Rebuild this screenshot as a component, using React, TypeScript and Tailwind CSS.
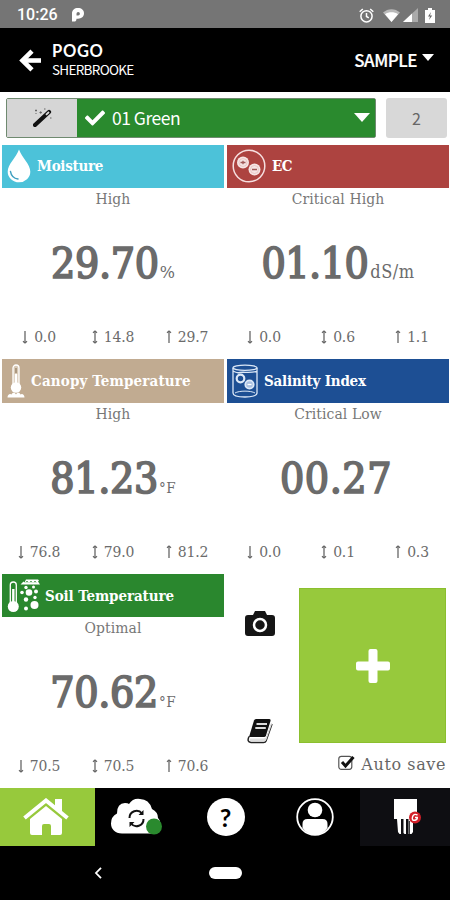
import React from "react";
import { FaCheck } from "react-icons/fa";

const slab = "font-['DejaVu_Serif_Condensed','DejaVu_Serif',serif] [font-stretch:90%]";
const sans = "font-['Noto_Sans_CJK_JP','Noto_Sans',sans-serif]";

const DropIcon = () => (
  <svg width="24" height="34" viewBox="0 0 24 34">
    <path d="M12 .5C9 9 .7 15 .7 22.800a11.300 10.500 0 0 0 22.600 0C23.300 15 15 9 12 .5Z" fill="#fff" />
    <path d="M3.500 22.500c.7 4.500 4 7 7.500 7.500" fill="none" stroke="#3f9fc0" strokeWidth="1.500" strokeLinecap="round" />
  </svg>
);

const IonIcon = () => (
  <svg width="34" height="34" viewBox="0 0 34 34">
    <circle cx="17" cy="17" r="15.800" fill="none" stroke="#f6dfdf" strokeWidth="1.500" />
    <circle cx="11" cy="13.500" r="6" fill="#f6e5e4" />
    <circle cx="22.500" cy="20.500" r="6" fill="#f6e5e4" />
    <path d="M8.500 13.500h5M11 11.800v3.400M20 20.500h5" stroke="#a05a58" strokeWidth="1.300" />
    <circle cx="11" cy="13.500" r="4" fill="none" stroke="#dcaaa8" strokeWidth=".5" />
    <circle cx="22.500" cy="20.500" r="4" fill="none" stroke="#dcaaa8" strokeWidth=".5" />
  </svg>
);

const CanopyIcon = () => (
  <svg width="18" height="34" viewBox="0 0 18 34">
    <rect x="6" y="1" width="6" height="24" rx="3" fill="#d8c9b6" stroke="#fff" strokeWidth="1.300" />
    <path d="M9 4v5" stroke="#a8937a" strokeWidth="1.800" />
    <path d="M9 10v14" stroke="#fff" strokeWidth="2.400" />
    <circle cx="9" cy="23.500" r="5.200" fill="#fff" />
    <path d="M.5 33.500c0-3 2.500-4.500 4-3 1-2.500 3.500-2 4.500 0 1-2 3.500-2.500 4.500 0 1.500-1.500 4 0 4 3Z" fill="#fff" />
  </svg>
);

const SalinityIcon = () => (
  <svg width="26" height="34" viewBox="0 0 26 34" fill="none" stroke="#dce8f7" strokeWidth="1.300">
    <ellipse cx="13" cy="3.800" rx="12" ry="2.600" />
    <path d="M1 4v25c0 2.500 5 4 12 4s12-1.500 12-4V4M1 7c3 1 3 2.500 7 1.500s8 1 17-1" />
    <circle cx="8.500" cy="14.500" r="3.800" strokeWidth="2.200" />
    <circle cx="17.500" cy="20.500" r="4.200" fill="#a9c0e1" strokeWidth="1.800" />
    <path d="M15.500 20.500h4" stroke="#fff" />
    <path d="M3 29c4-2.500 16-2.500 20 0" strokeWidth="1" />
  </svg>
);

const SoilIcon = () => (
  <svg width="33" height="34" viewBox="0 0 33 34">
    <rect x="3.300" y="3" width="6" height="24" rx="3" fill="none" stroke="#fff" strokeWidth="1.300" />
    <path d="M6.300 10v14" stroke="#fff" strokeWidth="2.400" />
    <circle cx="6.300" cy="27.500" r="5.500" fill="#fff" />
    <path d="M13.500 5.500l3-3 1 1 1.500-3h12l1 1-1 1 2 3Z" fill="#fff" />
    <path d="M19 3.500l1-1.500 1 1.500M23 3.500l1-1.500 1 1.500M27 3.500l1-1.500 1 1.500" fill="none" stroke="#2a872e" strokeWidth=".8" />
    <g fill="#fff">
      <circle cx="22" cy="13.500" r="3.300" /><circle cx="15" cy="13.500" r="1.800" /><circle cx="29" cy="12.500" r="2" />
      <circle cx="19" cy="8.500" r="1.700" /><circle cx="26.500" cy="8" r="1.500" /><circle cx="19" cy="20.500" r="2.200" />
      <circle cx="28" cy="18.500" r="1.700" /><circle cx="27.500" cy="26" r="4" /><circle cx="19" cy="29.500" r="2" />
    </g>
  </svg>
);

const StatArrow = ({ kind }: { kind: number }) => (
  <svg width="6" height="14" viewBox="0 0 6 14" fill="none" stroke="#666" strokeWidth="1.300">
    <path d="M3 1v12" />
    {kind !== 2 && <path d="M1 11.300L3 13l2-1.700" />}
    {kind !== 0 && <path d="M1 2.700L3 1l2 1.700" />}
  </svg>
);

type CardProps = {
  title: string; color: string; icon: React.ReactNode; gap: string;
  titleTrack: string; status: string; value: string; valueTrack: string; unit: string; unitClass: string; stats: string[];
};

const Card = ({ title, color, icon, gap, titleTrack, status, value, valueTrack, unit, unitClass, stats }: CardProps) => (
  <section className={`flex h-[214.700px] flex-col text-[#6b6b6b] ${slab}`}>
    <div className={`flex h-[43.500px] shrink-0 items-center pl-[5px] ${gap} ${color}`}>
      {icon}
      <h2 className={`whitespace-nowrap text-[15px] leading-5 font-bold text-white ${titleTrack}`}>{title}</h2>
    </div>
    <div className="h-[25px] text-center text-[15.500px] leading-[22px] tracking-[0.100px] text-[#777]">{status}</div>
    <div className="mt-[26px] flex h-[50px] items-baseline justify-center whitespace-nowrap">
      <span className={`text-[42.500px] leading-[50px] [-webkit-text-stroke:1.700px_#6b6b6b] ${valueTrack}`}>{value}</span>
      <span className={unitClass}>{unit}</span>
    </div>
    <div className="mt-[38px] grid grid-cols-3 text-[15.500px] leading-5 tracking-[-0.150px]">
      {stats.map((s, i) => (
        <div key={i} className="flex items-center justify-center gap-[6px]">
          <StatArrow kind={i} />
          <span>{s}</span>
        </div>
      ))}
    </div>
  </section>
);

export default function App() {
  return (
    <div className="flex h-[900px] w-[450px] flex-col overflow-hidden bg-white">
      <div className="flex h-[28px] items-center bg-[#757575] pt-[2px] pr-[15px] pl-[17px] text-white">
        <span className="w-[55px] font-[Roboto,sans-serif] text-[16px] leading-5 font-medium">10:26</span>
        <svg width="12" height="14" viewBox="0 0 12 14">
          <path fillRule="evenodd" d="M0 13.500V5.500C0 2 2.500 0 6 0s6 2 6 5.300-2.500 5.400-6 5.400H4.500c0 2-1 2.800-2.500 2.800ZM4.500 4.500v3h1.700a1.700 1.700 0 1 0-1.700-1.700Z" fill="#fff" />
        </svg>
        <div className="ml-auto flex items-center">
          <svg width="15" height="15" viewBox="0 0 15 15" fill="none" stroke="#fff" strokeWidth="1.500">
            <circle cx="7.500" cy="8.300" r="5.600" /><path d="M7.500 5v3.500l2.300 1.400M.7 3.800L3.800 1M14.300 3.800L11.200 1" />
          </svg>
          <svg className="ml-[9px]" width="17" height="13" viewBox="0 0 17 13">
            <path d="M0 3.500C5-1 12-1 17 3.500L8.500 13Z" fill="#b9b9b9" /><path d="M2 5.200c3.500-2.500 9.500-2.500 13 0L8.500 13Z" fill="#fff" />
          </svg>
          <svg className="ml-[3px]" width="15" height="14" viewBox="0 0 15 14">
            <path d="M15 0v14H0Z" fill="#aaa" /><path d="M9 5.600V14H0Z" fill="#fff" />
          </svg>
          <svg className="ml-[7px]" width="10" height="15" viewBox="0 0 10 15">
            <path d="M0 2h3V0h4v2h3v13H0Z" fill="#fff" /><path d="M6 4L3 8.500h2L4 12l3.200-4.500H5Z" fill="#666" />
          </svg>
        </div>
      </div>

      <header className={`flex h-[64px] shrink-0 items-center bg-black pr-[16px] pl-[19px] text-white ${sans}`}>
        <svg width="22" height="23" viewBox="0 0 22 23" fill="none" stroke="#fff" strokeWidth="4.600">
          <path d="M13 2.200L3.500 11.500 13 20.800" /><path d="M4 11.500h18" />
        </svg>
        <div className="ml-[11px] flex flex-col">
          <span className="font-[Lato,sans-serif] text-[16.500px] leading-[18px] font-bold tracking-[0.700px]">POGO</span>
          <span className="font-['Noto_Sans_CJK_JP','Noto_Sans',sans-serif] text-[13.500px] leading-[18px] tracking-[-0.700px]">SHERBROOKE</span>
        </div>
        <span className="ml-auto text-[17px] leading-5 font-medium tracking-[-0.500px] [-webkit-text-stroke:0.200px_white]">SAMPLE</span>
        <svg className="mb-[6px] ml-[5px]" width="12" height="7" viewBox="0 0 12 7"><path d="M0 0h12L6 7Z" fill="#fff" /></svg>
      </header>

      <div className={`flex h-[52.500px] shrink-0 items-start pt-[6px] pl-[6px] ${sans}`}>
        <div className="flex h-[39.500px] w-[370px] items-stretch rounded-[2px] border border-[#6f8a70]">
          <div className="flex w-[70px] items-center justify-center bg-[#d6d6d6]">
            <svg width="19" height="19" viewBox="0 0 19 19">
              <path d="M2 17L16 4" stroke="#111" strokeWidth="4.200" strokeLinecap="round" />
              <path d="M13 6.800l3-2.800" stroke="#ddd" strokeWidth="1.800" />
              <path d="M2 2.500h2M3 1.500v2M6.500 4.500h2.400M7.700 3.300v2.400M11 1h1.500M17 10h1.500M2.500 5.500h1" stroke="#666" />
            </svg>
          </div>
          <div className="flex flex-1 items-center bg-[#2a8a2e] pr-[5px] pl-[8px] text-white">
            <FaCheck className="h-[20px] w-[20px]" />
            <span className="ml-[7px] text-[17.500px] leading-6 tracking-[-0.500px]">01 Green</span>
            <svg className="ml-auto" width="16" height="9" viewBox="0 0 16 9"><path d="M0 0h16L8 9Z" fill="#fff" /></svg>
          </div>
        </div>
        <div className="ml-[10px] flex h-[39.500px] w-[61px] items-center justify-center rounded-[3px] bg-[#d8d8d8] text-[16px] text-[#666]">2</div>
      </div>

      <main className="grid h-[643.500px] shrink-0 grid-cols-[222px_222px] content-start gap-x-[3px] pl-[2px]">
        <Card title="Moisture" color="bg-[#4cc2d9]" icon={<DropIcon />} gap="gap-[6px]" titleTrack="tracking-[-0.300px]" status="High" value="29.70" valueTrack="tracking-[-0.300px]" unit="%" unitClass="ml-px text-[16px] [font-family:'DejaVu_Serif']" stats={["0.0", "14.8", "29.7"]} />
        <Card title="EC" color="bg-[#ad4340]" icon={<IonIcon />} gap="gap-[6px]" titleTrack="tracking-[-0.500px]" status="Critical High" value="01.10" valueTrack="tracking-[-0.500px]" unit="dS/m" unitClass="ml-[2px] text-[18px] tracking-[0.500px]" stats={["0.0", "0.6", "1.1"]} />
        <Card title="Canopy Temperature" color="bg-[#c1ab91]" icon={<CanopyIcon />} gap="gap-[6px]" titleTrack="tracking-[0.150px]" status="High" value="81.23" valueTrack="tracking-[-0.300px]" unit="°F" unitClass="ml-px text-[15px] tracking-[0.300px]" stats={["76.8", "79.0", "81.2"]} />
        <Card title="Salinity Index" color="bg-[#1d4f94]" icon={<SalinityIcon />} gap="gap-[6px]" titleTrack="tracking-[-0.200px]" status="Critical Low" value="00.27" valueTrack="tracking-[0.500px] mr-[4px]" unit="" unitClass="" stats={["0.0", "0.1", "0.3"]} />
        <Card title="Soil Temperature" color="bg-[#2a872e]" icon={<SoilIcon />} gap="gap-[5px]" titleTrack="tracking-[-0.100px]" status="Optimal" value="70.62" valueTrack="tracking-[-0.300px]" unit="°F" unitClass="ml-px text-[15px] tracking-[0.300px]" stats={["70.5", "70.5", "70.6"]} />
        <section className="flex h-[214px] pt-[14.500px] pl-[18px]">
          <div className="flex w-[54px] flex-col pt-[23px]">
            <svg width="30" height="26" viewBox="0 0 30 26">
              <path d="M3 4h5l2-4h10l2 4h5q3 0 3 3v15q0 3-3 3H3q-3 0-3-3V7q0-3 3-3Z" fill="#151515" />
              <circle cx="15" cy="14" r="6" fill="none" stroke="#fff" strokeWidth="2.500" />
            </svg>
            <svg className="mt-[82px] ml-[2px]" width="27" height="25" viewBox="0 0 27 25">
              <path d="M7 1.500Q7.500 0 9 0h13q2 0 1.500 2L19 16.500Q18.500 18 17 18H2Z" fill="#111" />
              <path d="M2 17.500q-2.500 5.500 2 6h12.500q2 0 2.500-1.500L25 5" fill="none" stroke="#222" strokeWidth="1.500" />
              <path d="M3 19.500h13.500q2.500 0 3-2L24 4l1 1-5.500 15.500q-.5 2-2.500 2H4q-2-1.500-1-3Z" fill="#ddd" />
              <path d="M9.500 5h10.500M8.300 9h10.500" stroke="#ddd" strokeWidth="1.800" />
            </svg>
          </div>
          <div className="flex w-[147px] flex-col">
            <div className="flex h-[155px] shrink-0 items-center justify-center border border-[#8bbf2e] bg-[#97c93c]">
              <svg width="34" height="34" viewBox="0 0 34 34"><path d="M14.500 0h5q2 0 2 2v10.500H32q2 0 2 2v5q0 2-2 2H21.500V32q0 2-2 2h-5q-2 0-2-2V21.500H2q-2 0-2-2v-5q0-2 2-2h10.500V2q0-2 2-2Z" fill="#fff" /></svg>
            </div>
            <div className="flex h-[44px] items-center justify-end gap-[6px]">
              <svg className="mb-[5px] shrink-0" width="17" height="15" viewBox="0 0 17 15" fill="none">
                <rect x=".8" y="1.300" width="13" height="13" rx="2.500" stroke="#555" strokeWidth="1.200" />
                <path d="M4 7l3.500 4L15.500 2" stroke="#111" strokeWidth="3" />
              </svg>
              <span className={`whitespace-nowrap text-[16px] tracking-[0.600px] text-[#666] font-['DejaVu_Serif',serif]`}>Auto save</span>
            </div>
          </div>
        </section>
      </main>

      <nav className="flex h-[58px] shrink-0 bg-black">
        <div className="flex w-[95px] items-center justify-center bg-[#97c93c]">
          <svg className="mr-[4px]" width="46" height="38" viewBox="0 0 46 38">
            <path d="M1.500 20L23 2.500 44.500 20" fill="none" stroke="#fff" strokeWidth="4" />
            <path d="M32 1h7v14l-7-6ZM7 21L23 8l16 13v14q0 2-2 2h-9v-9q0-2-2-2h-5q-2 0-2 2v9H9q-2 0-2-2Z" fill="#fff" />
          </svg>
        </div>
        <div className="flex w-[90px] items-center pl-[16px]">
          <svg width="52" height="38" viewBox="0 0 52 38">
            <path d="M11 35.500C4 35.500 0 31 0 25.500q0-7 6-10Q6 5 14 5q3 0 4 1Q22 0 29 1q9 0 12 10 6 3 6 9 3 3 2 8t-9 7.500Z" fill="#fff" />
            <path d="M18.500 20a7 7 0 0 1 12.500-4.500M32.500 21a7 7 0 0 1-12.500 4.500" fill="none" stroke="#111" strokeWidth="2" />
            <path d="M32.500 12v5h-5ZM18.500 29v-5h5Z" fill="#111" /><circle cx="43" cy="28.500" r="8" fill="#2a8a2e" />
          </svg>
        </div>
        <div className="flex w-[81px] items-center justify-center">
          <div className="flex h-[38px] w-[38px] items-center justify-center rounded-full bg-white font-[Lato,sans-serif] text-[25px] leading-[38px] font-bold text-black">?</div>
        </div>
        <div className="flex w-[94px] items-center justify-center pl-[4px]">
          <svg width="38" height="38" viewBox="0 0 38 38">
            <circle cx="19" cy="19" r="17.800" fill="none" stroke="#fff" strokeWidth="1.800" />
            <circle cx="19" cy="12" r="7.300" fill="#fff" />
            <path d="M6.500 30v-4q0-5 5-5h15q5 0 5 5v4q-5 7-12.500 7T6.500 30Z" fill="#fff" />
          </svg>
        </div>
        <div className="flex flex-1 items-center justify-center bg-[#0e0e12]">
          <svg className="ml-[3px]" width="30" height="36" viewBox="0 0 30 36">
            <path d="M2 0h23v20H2ZM5 20h4v15H7.500L6 33ZM11.500 20h2.500v15h-1.500l-1-1ZM16.500 20h4.500v13l-1.500 2h-3Z" fill="#fff" />
            <path d="M17.300 22v13" stroke="#0e0e12" strokeWidth="1" />
            <circle cx="23" cy="18.500" r="6" fill="#d3202a" />
            <path d="M25.500 16q-4-1.800-5 2t2.500 3.200q2.500-.5 2.300-2.700H23" fill="none" stroke="#fff" strokeWidth="1.400" />
          </svg>
        </div>
      </nav>
      <div className="flex h-[54px] shrink-0 items-center bg-black pl-[94px]">
        <svg width="8" height="12" viewBox="0 0 8 12"><path d="M7 .8L2 6l5 5.200" fill="none" stroke="#fff" strokeWidth="1.800" /></svg>
        <div className="ml-[107px] h-[12px] w-[33px] rounded-full bg-white" />
      </div>
    </div>
  );
}
